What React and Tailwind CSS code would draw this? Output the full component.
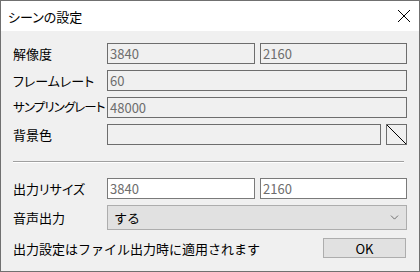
import { ChevronDown } from "lucide-react";

const font = {
  fontFamily: '"Noto Sans CJK JP", "Noto Sans", sans-serif',
};

function Row({ label, labelClass = "text-[13px]", children }) {
  return (
    <div className="flex items-center h-[21px]">
      <div
        className={`w-[94px] shrink-0 whitespace-nowrap leading-none text-black [font-feature-settings:'palt'] ${labelClass}`}
      >
        {label}
      </div>
      <div className="flex flex-1 gap-[5px] h-full">{children}</div>
    </div>
  );
}

function Field({ value, disabled = true, className = "" }) {
  return (
    <div
      className={`h-full flex items-center px-[2px] border text-[13px] leading-none ${
        disabled
          ? "bg-[#f0f0f0] border-[#6d6d6d] text-[#6d6d6d]"
          : "bg-white border-[#7a7a7a] text-[#6d6d6d]"
      } ${className}`}
    >
      {value}
    </div>
  );
}

export default function App() {
  return (
    <div
      className="w-[420px] h-[272px] border border-[#707070] bg-[#f0f0f0] flex flex-col overflow-hidden"
      style={font}
    >
      {/* title bar */}
      <div className="h-[30px] bg-white flex items-center justify-between pl-[7px] pr-[7px] shrink-0">
        <span className="text-[13px] text-black leading-none [font-feature-settings:'palt']">
          シーンの設定
        </span>
        <svg width="14" height="14" viewBox="0 0 14 14" className="mr-[1px]">
          <path d="M1 1 L13 13 M13 1 L1 13" stroke="#000" strokeWidth="1" />
        </svg>
      </div>

      <div className="flex flex-col pl-[12px] pr-[12px] pt-[12px]">
        <div className="flex flex-col gap-[6px]">
          <Row label="解像度">
            <Field value="3840" className="w-[148px]" />
            <Field value="2160" className="flex-1" />
          </Row>
          <Row label="フレームレート">
            <Field value="60" className="flex-1" />
          </Row>
          <Row label="サンプリングレート" labelClass="text-[12.5px] tracking-[-0.9px]">
            <Field value="48000" className="flex-1" />
          </Row>
          <Row label="背景色">
            <Field value="" className="flex-1" />
            <div className="w-[21px] h-full border border-[#6d6d6d] bg-[#f0f0f0]">
              <svg width="19" height="19" viewBox="0 0 19 19" className="block">
                <path d="M0 0 L19 19" stroke="#000" strokeWidth="1" />
              </svg>
            </div>
          </Row>
        </div>

        <div className="mt-[16px] mr-[3px] h-[2px] border-t border-[#a0a0a0] border-b border-b-white" />

        <div className="flex flex-col gap-[6px] mt-[15px]">
          <Row label="出力リサイズ">
            <Field value="3840" disabled={false} className="w-[148px]" />
            <Field value="2160" disabled={false} className="flex-1" />
          </Row>
          <div className="flex items-center h-[25px]">
            <div className="w-[94px] shrink-0 text-[13px] leading-none text-black">
              音声出力
            </div>
            <div className="flex-1 h-full flex items-center justify-between bg-[#e1e1e1] border border-[#adadad] pl-[6px] pr-[5px]">
              <span className="text-[13px] leading-none text-black">する</span>
              <ChevronDown size={13} strokeWidth={1.2} color="#333" />
            </div>
          </div>
        </div>

        <div className="flex items-center justify-between mt-[8px] h-[20px]">
          <span className="text-[13px] leading-none text-black">
            出力設定はファイル出力時に適用されます
          </span>
          <button className="w-[83px] h-[20px] bg-[#e1e1e1] border border-[#adadad] text-[13px] leading-none text-black mr-[1px]">
            OK
          </button>
        </div>
      </div>
    </div>
  );
}
